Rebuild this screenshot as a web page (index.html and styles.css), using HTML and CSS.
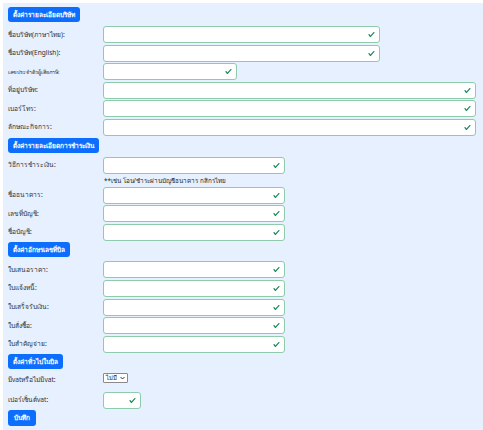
FILE: index.html
```html
<!DOCTYPE html>
<html lang="th">
<head>
<meta charset="utf-8">
<title>ตั้งค่า</title>
<link rel="stylesheet" href="styles.css">
</head>
<body>
<div class="panel">
  <button class="btn btn-section">ตั้งค่ารายละเอียดบริษัท</button>
  <div class="row"><label class="lbl">ชื่อบริษัท(ภาษาไทย):</label><div class="field w-md"><input class="inp" type="text"><svg class="chk" viewBox="0 0 8 8"><path d="M2.3 6.73.6 4.53c-.4-1.04.46-1.4 1.1-.8l1.1 1.4 3.4-3.8c.6-.63 1.6-.27 1.2.7l-4 4.6c-.43.5-.8.4-1.1.1z"/></svg></div></div>
  <div class="row"><label class="lbl">ชื่อบริษัท(English):</label><div class="field w-md"><input class="inp" type="text"><svg class="chk" viewBox="0 0 8 8"><path d="M2.3 6.73.6 4.53c-.4-1.04.46-1.4 1.1-.8l1.1 1.4 3.4-3.8c.6-.63 1.6-.27 1.2.7l-4 4.6c-.43.5-.8.4-1.1.1z"/></svg></div></div>
  <div class="row"><label class="lbl lbl-sm">เลขประจำตัวผู้เสียภาษี:</label><div class="field w-sm"><input class="inp" type="text"><svg class="chk" viewBox="0 0 8 8"><path d="M2.3 6.73.6 4.53c-.4-1.04.46-1.4 1.1-.8l1.1 1.4 3.4-3.8c.6-.63 1.6-.27 1.2.7l-4 4.6c-.43.5-.8.4-1.1.1z"/></svg></div></div>
  <div class="row"><label class="lbl">ที่อยู่บริษัท:</label><div class="field w-lg"><input class="inp" type="text"><svg class="chk" viewBox="0 0 8 8"><path d="M2.3 6.73.6 4.53c-.4-1.04.46-1.4 1.1-.8l1.1 1.4 3.4-3.8c.6-.63 1.6-.27 1.2.7l-4 4.6c-.43.5-.8.4-1.1.1z"/></svg></div></div>
  <div class="row"><label class="lbl">เบอร์โทร:</label><div class="field w-lg"><input class="inp" type="text"><svg class="chk" viewBox="0 0 8 8"><path d="M2.3 6.73.6 4.53c-.4-1.04.46-1.4 1.1-.8l1.1 1.4 3.4-3.8c.6-.63 1.6-.27 1.2.7l-4 4.6c-.43.5-.8.4-1.1.1z"/></svg></div></div>
  <div class="row"><label class="lbl">ลักษณะกิจการ:</label><div class="field w-lg"><input class="inp" type="text"><svg class="chk" viewBox="0 0 8 8"><path d="M2.3 6.73.6 4.53c-.4-1.04.46-1.4 1.1-.8l1.1 1.4 3.4-3.8c.6-.63 1.6-.27 1.2.7l-4 4.6c-.43.5-.8.4-1.1.1z"/></svg></div></div>

  <button class="btn btn-section">ตั้งค่ารายละเอียดการชำระเงิน</button>
  <div class="row"><label class="lbl">วิธีการชำระเงิน:</label><div class="field w-mid"><input class="inp" type="text"><svg class="chk" viewBox="0 0 8 8"><path d="M2.3 6.73.6 4.53c-.4-1.04.46-1.4 1.1-.8l1.1 1.4 3.4-3.8c.6-.63 1.6-.27 1.2.7l-4 4.6c-.43.5-.8.4-1.1.1z"/></svg></div></div>
  <div class="note">**เช่น โอน/ชำระผ่านบัญชีธนาคาร กสิกรไทย</div>
  <div class="row"><label class="lbl">ชื่อธนาคาร:</label><div class="field w-mid"><input class="inp" type="text"><svg class="chk" viewBox="0 0 8 8"><path d="M2.3 6.73.6 4.53c-.4-1.04.46-1.4 1.1-.8l1.1 1.4 3.4-3.8c.6-.63 1.6-.27 1.2.7l-4 4.6c-.43.5-.8.4-1.1.1z"/></svg></div></div>
  <div class="row"><label class="lbl">เลขที่บัญชี:</label><div class="field w-mid"><input class="inp" type="text"><svg class="chk" viewBox="0 0 8 8"><path d="M2.3 6.73.6 4.53c-.4-1.04.46-1.4 1.1-.8l1.1 1.4 3.4-3.8c.6-.63 1.6-.27 1.2.7l-4 4.6c-.43.5-.8.4-1.1.1z"/></svg></div></div>
  <div class="row"><label class="lbl">ชื่อบัญชี:</label><div class="field w-mid"><input class="inp" type="text"><svg class="chk" viewBox="0 0 8 8"><path d="M2.3 6.73.6 4.53c-.4-1.04.46-1.4 1.1-.8l1.1 1.4 3.4-3.8c.6-.63 1.6-.27 1.2.7l-4 4.6c-.43.5-.8.4-1.1.1z"/></svg></div></div>

  <button class="btn btn-section">ตั้งค่าอักษรเลขที่บิล</button>
  <div class="row"><label class="lbl">ใบเสนอราคา:</label><div class="field w-mid"><input class="inp" type="text"><svg class="chk" viewBox="0 0 8 8"><path d="M2.3 6.73.6 4.53c-.4-1.04.46-1.4 1.1-.8l1.1 1.4 3.4-3.8c.6-.63 1.6-.27 1.2.7l-4 4.6c-.43.5-.8.4-1.1.1z"/></svg></div></div>
  <div class="row"><label class="lbl">ใบแจ้งหนี้:</label><div class="field w-mid"><input class="inp" type="text"><svg class="chk" viewBox="0 0 8 8"><path d="M2.3 6.73.6 4.53c-.4-1.04.46-1.4 1.1-.8l1.1 1.4 3.4-3.8c.6-.63 1.6-.27 1.2.7l-4 4.6c-.43.5-.8.4-1.1.1z"/></svg></div></div>
  <div class="row"><label class="lbl">ใบเสร็จรับเงิน:</label><div class="field w-mid"><input class="inp" type="text"><svg class="chk" viewBox="0 0 8 8"><path d="M2.3 6.73.6 4.53c-.4-1.04.46-1.4 1.1-.8l1.1 1.4 3.4-3.8c.6-.63 1.6-.27 1.2.7l-4 4.6c-.43.5-.8.4-1.1.1z"/></svg></div></div>
  <div class="row"><label class="lbl">ใบสั่งซื้อ:</label><div class="field w-mid"><input class="inp" type="text"><svg class="chk" viewBox="0 0 8 8"><path d="M2.3 6.73.6 4.53c-.4-1.04.46-1.4 1.1-.8l1.1 1.4 3.4-3.8c.6-.63 1.6-.27 1.2.7l-4 4.6c-.43.5-.8.4-1.1.1z"/></svg></div></div>
  <div class="row"><label class="lbl">ใบสำคัญจ่าย:</label><div class="field w-mid"><input class="inp" type="text"><svg class="chk" viewBox="0 0 8 8"><path d="M2.3 6.73.6 4.53c-.4-1.04.46-1.4 1.1-.8l1.1 1.4 3.4-3.8c.6-.63 1.6-.27 1.2.7l-4 4.6c-.43.5-.8.4-1.1.1z"/></svg></div></div>

  <button class="btn btn-section">ตั้งค่าทั่วไปในบิล</button>
  <div class="row row-top"><label class="lbl lbl-low">มีvatหรือไม่มีvat:</label><div class="sel">ไม่มี<svg class="chev" viewBox="0 0 10 6"><path d="M1 1l4 4 4-4" fill="none" stroke="#222" stroke-width="1.8"/></svg></div></div>
  <div class="row"><label class="lbl">เปอร์เซ็นต์vat:</label><div class="field w-xs"><input class="inp" type="text"><svg class="chk" viewBox="0 0 8 8"><path d="M2.3 6.73.6 4.53c-.4-1.04.46-1.4 1.1-.8l1.1 1.4 3.4-3.8c.6-.63 1.6-.27 1.2.7l-4 4.6c-.43.5-.8.4-1.1.1z"/></svg></div></div>
  <button class="btn btn-save">บันทึก</button>
</div>
</body>
</html>
```

FILE: styles.css
```css
html, body {
  margin: 0;
  padding: 0;
  background: #ffffff;
}
body {
  padding: 3px 0 0 3px;
  font-family: "Noto Sans", "Liberation Sans", sans-serif;
  font-size: 7px;
  color: #212529;
}
.panel {
  background: #e6f0fe;
  padding: 4px 0 6px 5px;
  min-height: 427px;
  box-sizing: border-box;
  display: flex;
  flex-direction: column;
  align-items: flex-start;
}
.btn {
  background: #0d6efd;
  color: #fff;
  border: none;
  border-radius: 3px;
  font-family: inherit;
  font-size: 6.5px;
  font-weight: 700;
  height: 15px;
  padding: 0 5px;
  line-height: 15px;
  margin: 0 0 4px 0;
  white-space: nowrap;
}
.btn-save {
  height: 16px;
  line-height: 16px;
  margin: 0;
  padding: 0 6px;
}
.row {
  display: flex;
  align-items: center;
  height: 17px;
  margin-bottom: 1.6px;
}
.row-top {
  align-items: flex-start;
}
.lbl {
  width: 95px;
  flex: none;
  font-size: 6.6px;
  line-height: 10px;
  white-space: nowrap;
  color: #2b2f33;
}
.lbl-sm {
  font-size: 5.3px;
}
.lbl-low {
  margin-top: 2px;
}
.field {
  position: relative;
  height: 17px;
}
.w-md { width: 277px; }
.w-sm { width: 134px; }
.w-lg { width: 373px; }
.w-mid { width: 182px; }
.w-xs { width: 38px; }
.inp {
  display: block;
  width: 100%;
  height: 100%;
  box-sizing: border-box;
  border: 1.5px solid #8dcbab;
  border-radius: 3px;
  background: #fff;
  margin: 0;
  padding: 0 12px 0 4px;
  outline: none;
}
.chk {
  position: absolute;
  right: 5px;
  top: 5px;
  width: 7px;
  height: 7px;
  fill: #198754;
}
.note {
  margin: 0 0 0 96px;
  height: 11.4px;
  font-size: 6.3px;
  line-height: 11px;
  color: #212529;
}
.sel {
  display: flex;
  align-items: center;
  gap: 3px;
  height: 10px;
  box-sizing: border-box;
  border: 1px solid #8a8a8a;
  border-radius: 1px;
  background: #fff;
  padding: 0 2px;
  font-size: 6px;
  line-height: 8px;
  width: 25px;
}
.chev {
  width: 6px;
  height: 4px;
}
```
